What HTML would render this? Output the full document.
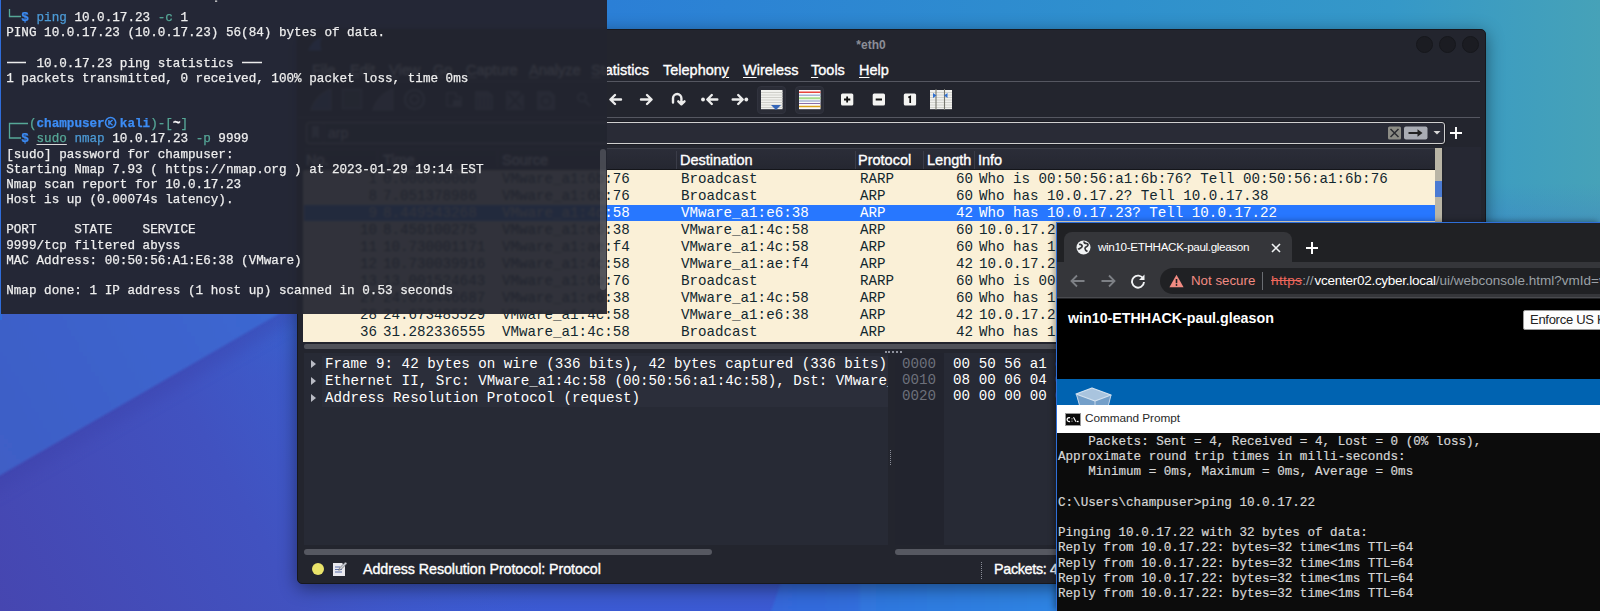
<!DOCTYPE html>
<html>
<head>
<meta charset="utf-8">
<title>desktop</title>
<style>
*{box-sizing:border-box;margin:0;padding:0}
html,body{width:1600px;height:611px;overflow:hidden}
body{position:relative;font-family:"Liberation Sans",sans-serif;background:#3d56c4;}
.abs{position:absolute}
.mono{font-family:"Liberation Mono",monospace}
/* wallpaper */
#wall{position:absolute;left:0;top:0;width:1600px;height:611px;
 background:linear-gradient(100deg,#2b74d8 0%,#2d86d2 45%,#3596c6 75%,#47a2b4 100%);}
#wall2{position:absolute;left:0;top:0;width:1600px;height:611px;
 background:linear-gradient(180deg,rgba(60,80,200,0) 0%,rgba(60,80,200,0) 35%,rgba(62,84,200,.85) 60%,rgba(62,80,196,1) 100%);}
/* ---------- Wireshark ---------- */
#ws{position:absolute;left:297px;top:29px;width:1189px;height:555px;background:#23252e;border-radius:5px 5px 5px 5px;border:1px solid #17181d;
 box-shadow:0 4px 18px rgba(0,0,0,.45);color:#fff;overflow:hidden}
#ws .title{position:absolute;left:0;width:1146px;top:8px;text-align:center;font-size:12px;color:#8b8e97;font-weight:bold}
#ws .wb{position:absolute;top:6px;width:17px;height:17px;border-radius:50%;background:#1b1c22;border:1px solid #16171c}
#ws .menu{position:absolute;top:32px;font-size:14.5px;color:#fff;white-space:nowrap;-webkit-text-stroke:.35px #fff}
#ws .menu u{text-decoration-thickness:1px;text-underline-offset:2px}
#ws .hl{position:absolute;left:0;height:1.500px;background:#555761}

#ws .ico{position:absolute;top:58px;width:24px;height:24px}
#ws .tbtn{position:absolute;top:55px;width:29px;height:29px;border-radius:4px;background:#2c2e38;border:1px solid #30323c}
#filter{position:absolute;left:8px;top:92px;width:1139px;height:22px;border:1px solid #cfcfcf;border-radius:3px;background:#292b36;box-shadow:0 0 0 1px #1b1c23}
#filter .txt{position:absolute;left:21px;top:2px;font-size:14px;color:#fff}
#plist{position:absolute;left:6px;top:118px;width:1131px;height:194px;background:#faf0d7;overflow:hidden}
#phead{position:absolute;left:0;top:0;width:1131px;height:22px;background:linear-gradient(#2b2d38,#252731);border-top:1px solid #3a3c47;border-bottom:1px solid #14151a}
#phead span{position:absolute;top:3px;font-size:14.5px;color:#fff;-webkit-text-stroke:.35px #fff;white-space:nowrap}
#phead i{position:absolute;top:2px;width:1px;height:18px;background:#3a3c48}
.prow{position:absolute;left:0;width:1131px;height:17px;font-family:"Liberation Mono",monospace;font-size:14.200px;line-height:17px;color:#12272e;white-space:pre}
.prow span{position:absolute;top:1px}
.prow.sel{background:linear-gradient(#faf0d7 1px,#2777ff 1px);color:#fff}
#pscroll{position:absolute;left:1137px;top:118px;width:7px;height:194px;background:#b9b5a6}
#pscroll b{position:absolute;left:0;top:33px;width:7px;height:16px;background:#4b7bd3}
#dpane{position:absolute;left:6px;top:323px;width:584px;height:192px;background:#272a35;overflow:hidden}
#dpane .r{position:absolute;left:0;width:584px;height:17px;margin-top:1px;background:linear-gradient(to right,transparent 18px,#2b2e3a 18px);font-family:"Liberation Mono",monospace;font-size:14.200px;line-height:17px;color:#fff;white-space:pre;padding-left:21px}
#dpane .r:before{content:"";position:absolute;left:6.500px;top:4px;border-left:5px solid #b9bbc4;border-top:4px solid transparent;border-bottom:4px solid transparent}
#bpane{position:absolute;left:597px;top:323px;width:590px;height:192px;background:#272a35;overflow:hidden}
#bpane .off{position:absolute;left:0;top:0;width:49px;height:192px;background:#22242e}
#bpane .r{position:absolute;left:7px;margin-top:1px;height:17px;font-family:"Liberation Mono",monospace;font-size:14.200px;line-height:17px;color:#fff;white-space:pre}
#bpane .r em{font-style:normal;color:#6d707b}
.hsb{position:absolute;height:6px;border-radius:3px;background:#565861}
#status{position:absolute;left:0;top:526px;width:1187px;height:27px;}
#status .t{position:absolute;top:5px;font-size:14.300px;letter-spacing:-.08px;color:#fff;-webkit-text-stroke:.35px #fff;white-space:nowrap}

/* ---------- Terminal ---------- */
#term{position:absolute;left:1px;top:-6px;width:605.5px;height:319.500px;background:rgba(34,36,47,.935);
 -webkit-backdrop-filter:blur(1.200px);backdrop-filter:blur(1.200px);overflow:hidden}
#term pre{position:absolute;left:5.200px;top:16px;font-family:"Liberation Mono",monospace;font-size:12.640px;line-height:15.170px;color:#eeeeee;white-space:pre;-webkit-text-stroke:.25px}
#term .g{color:#56a897}
#term .b{color:#3c8cf4;font-weight:bold}
#term .c{color:#4c9bd6}
#term .w{color:#fff;font-weight:bold}
#term .u{text-decoration:underline;text-decoration-color:#d8d8d8;text-underline-offset:1.500px}
#term .sb{position:absolute;left:598.700px;top:155px;width:6px;height:141px;border-radius:3px;background:rgba(255,255,255,.17)}

/* ---------- Browser ---------- */
#br{position:absolute;left:1056px;top:222px;width:544px;height:389px;background:#202124;border-left:1px solid #2f6fd8;border-top:1px solid #2f6fd8;overflow:hidden;
 box-shadow:-2px -1px 6px rgba(0,0,0,.35)}
#br .tab{position:absolute;left:7px;top:9px;width:228px;height:31px;background:#35363a;border-radius:8px 8px 0 0}
#br .tabt{position:absolute;left:41px;top:17px;font-size:11.700px;color:#fff;white-space:nowrap;letter-spacing:-.36px}
#br .bar{position:absolute;left:0;top:39px;width:544px;height:36px;background:#35363a;border-bottom:1px solid #4a4b4f}
#br .omni{position:absolute;left:103px;top:45px;width:460px;height:26px;border-radius:13px;background:#202124}
#br .ns{position:absolute;left:134px;top:50px;font-size:13.300px;color:#f28b82;white-space:nowrap}
#br .url{position:absolute;left:214px;top:50px;font-size:13.500px;color:#9aa0a6;white-space:nowrap}
#br .url s{color:#ee675c;letter-spacing:.4px}
#br .url b{font-weight:normal;color:#fff;letter-spacing:-.27px;margin-left:1px}
#page{position:absolute;left:0;top:76px;width:544px;height:313px;background:#000}
#page .h{position:absolute;left:11px;top:11px;font-size:14.250px;font-weight:bold;color:#fff;white-space:nowrap}
#page .btn{position:absolute;left:466px;top:11px;width:120px;height:20px;background:#fdfdfd;border:1px solid #9a9a9a;border-radius:2px;font-size:13px;letter-spacing:-.28px;line-height:18px;color:#222;padding-left:6px;white-space:nowrap}
#desk{position:absolute;left:0;top:80px;width:544px;height:26px;background:#0063b1}
#cmdt{position:absolute;left:0;top:106px;width:544px;height:28px;background:#fff}
#cmdt span{position:absolute;left:28px;top:6px;font-size:11.800px;letter-spacing:-.05px;color:#2a2a2a;white-space:nowrap}
#cmd{position:absolute;left:0;top:134px;width:544px;height:180px;background:#0c0c0c}
#cmd pre{position:absolute;left:1px;top:2px;font-family:"Liberation Mono",monospace;font-size:12.600px;line-height:15.200px;color:#d6d6d6;white-space:pre;-webkit-text-stroke:.2px}
</style>
</head>
<body>
<svg class="abs" style="left:0;top:0" width="1600" height="611" viewBox="0 0 1600 611">
  <defs>
    <linearGradient id="gx" x1="0" y1="0" x2="1" y2="0">
      <stop offset="0" stop-color="#2c6fda"/><stop offset=".38" stop-color="#2b7fd6"/><stop offset=".7" stop-color="#2f90cd"/><stop offset=".87" stop-color="#3598c8"/><stop offset="1" stop-color="#46a2b8"/>
    </linearGradient>
    <linearGradient id="gy" x1="0" y1="0" x2="0" y2="1">
      <stop offset="0" stop-color="#3d5bcb" stop-opacity="0"/><stop offset=".3" stop-color="#3d5bcb" stop-opacity="0"/><stop offset=".62" stop-color="#3d5bcb" stop-opacity=".9"/><stop offset=".93" stop-color="#3d5acb" stop-opacity="1"/><stop offset="1" stop-color="#3b5ad3" stop-opacity="1"/>
    </linearGradient>
    <linearGradient id="gbl" x1="0" y1="1" x2="1" y2="0" gradientUnits="userSpaceOnUse" >
      <stop offset="0" stop-color="#4546b0"/><stop offset="1" stop-color="#3d5bcb"/>
    </linearGradient>
    <linearGradient id="gbl2" gradientUnits="userSpaceOnUse" x1="0" y1="611" x2="420" y2="380">
      <stop offset="0" stop-color="#4646b0"/><stop offset=".55" stop-color="#4152c0"/><stop offset="1" stop-color="#3d5bcb" stop-opacity="0"/>
    </linearGradient>
    <linearGradient id="gtri" gradientUnits="userSpaceOnUse" x1="0" y1="470" x2="300" y2="300">
      <stop offset="0" stop-color="#3f5ec6"/><stop offset="1" stop-color="#3b68d2"/>
    </linearGradient>
    <linearGradient id="gr1" gradientUnits="userSpaceOnUse" x1="772" y1="0" x2="1060" y2="0"><stop offset="0" stop-color="#3468da"/><stop offset=".3" stop-color="#336edc"/><stop offset=".31" stop-color="#3076de"/><stop offset="1" stop-color="#2d84e2"/></linearGradient>
    <filter id="bl"><feGaussianBlur stdDeviation="1.200"/></filter>
    <filter id="bl2"><feGaussianBlur stdDeviation="7"/></filter>
  </defs>
  <rect width="1600" height="611" fill="url(#gx)"/>
  <rect width="1600" height="611" fill="url(#gy)"/>
  <rect width="700" height="611" fill="url(#gbl2)"/>
  <path d="M-20 489L320 292L-20 292z" fill="#3a3fa8" opacity=".35" filter="url(#bl2)" transform="translate(6,10)"/>
  <path d="M-20 487L320 290L-20 290z" fill="url(#gtri)" filter="url(#bl)"/>
  <rect x="0" y="0" width="2" height="320" fill="#2f6cd9"/>
  <path d="M768 620L782 580L1060 580L1060 620z" fill="url(#gr1)" filter="url(#bl)"/>
</svg>
<div class="abs" style="left:1px;top:0;width:605.500px;height:313.500px;background:#41529a"></div>
<!-- ================= WIRESHARK ================= -->
<div id="ws">
  <div class="title">*eth0</div>
  <svg class="abs" style="left:10px;top:7px" width="15" height="14" viewBox="0 0 15 14"><path d="M0 13.500C3 7 7 2 14 0c-2 4-2 9-.5 13.500z" fill="#3f6fe0"/></svg>
  <div class="wb" style="left:1118px"></div>
  <div class="wb" style="left:1141px"></div>
  <div class="wb" style="left:1164px"></div>
  <div class="menu" style="left:14px"><u>F</u>ile</div>
  <div class="menu" style="left:52px"><u>E</u>dit</div>
  <div class="menu" style="left:91px"><u>V</u>iew</div>
  <div class="menu" style="left:135px"><u>G</u>o</div>
  <div class="menu" style="left:168px"><u>C</u>apture</div>
  <div class="menu" style="left:231px"><u>A</u>nalyze</div>
  <div class="menu" style="left:293px"><u>S</u>tatistics</div>
  <div class="menu" style="left:365px">Telephon<u>y</u></div>
  <div class="menu" style="left:445px"><u>W</u>ireless</div>
  <div class="menu" style="left:513px"><u>T</u>ools</div>
  <div class="menu" style="left:561px"><u>H</u>elp</div>
  <div class="hl" style="top:50.500px;width:1182px"></div>
  <div class="hl" style="top:87px;width:1182px;height:1px"></div>

  <!-- toolbar -->
<svg class="abs" style="left:0;top:52px" width="1187" height="36" viewBox="298 82 1187 36">
  <!-- left group (dim, under terminal) -->
  <g opacity=".9">
   <path d="M311 110 L331 110 L331 89 C322 92 314 100 311 110Z" fill="#4a5f9e" stroke="#8d93a8" stroke-width="1.2"/>
   <rect x="342.5" y="89.500" width="19" height="19" fill="#4a4d59" stroke="#8d93a8" stroke-width="1.2"/>
   <path d="M373 110 L393 110 L393 89 C384 92 376 100 373 110Z" fill="#6f748a" stroke="#8d93a8" stroke-width="1.2"/>
   <circle cx="414.500" cy="99.500" r="9.500" fill="none" stroke="#8d93a8" stroke-width="2.200"/>
   <circle cx="414.500" cy="99.500" r="4.200" fill="none" stroke="#8d93a8" stroke-width="2"/>
   <path d="M447 93h9v4h5v9h-14z" fill="none" stroke="#8d93a8" stroke-width="1.600"/><rect x="453" y="100" width="8" height="6" fill="#8d93a8"/>
   <path d="M475 91h13l5 4v15h-18z" fill="#7c8196"/><path d="M478 97v11M482 97v11M486 97v11M490 97v11" stroke="#3a3d4a" stroke-width="1.200"/>
   <path d="M506 91h13l5 4v15h-18z" fill="#7c8196"/><path d="M508 93l14 15M522 93l-14 15" stroke="#2b2d38" stroke-width="2"/>
   <path d="M537 91h13l5 4v15h-18z" fill="#7c8196"/><circle cx="546" cy="101" r="4.500" fill="none" stroke="#2b2d38" stroke-width="2"/>
   <circle cx="582" cy="97.500" r="4" fill="none" stroke="#8d93a8" stroke-width="1.800"/><path d="M585 101l5 5" stroke="#8d93a8" stroke-width="2"/>
  </g>
  <!-- navigation arrows -->
  <g fill="none" stroke="#ececec" stroke-width="2.400" stroke-linecap="round" stroke-linejoin="round">
   <path d="M621 99.500H610.800M615 95l-4.600 4.500 4.600 4.500"/>
   <path d="M641 99.500H651.200M647 95l4.600 4.500-4.600 4.500"/>
   <path d="M673 102.500V98.200a4.200 4.200 0 0 1 8.400 0v5M678.300 101.300l3.100 3 3.100-3"/>
   <path d="M717.300 99.500H707.800M711.800 95l-4.500 4.500 4.500 4.500"/>
   <path d="M732.700 99.500H742.200M738.200 95l4.500 4.500-4.500 4.500"/>
  </g>
  <circle cx="703" cy="99.500" r="1.900" fill="#ececec"/>
  <circle cx="746.300" cy="99.500" r="1.900" fill="#ececec"/>
  <!-- autoscroll -->
  <rect x="757.500" y="86.500" width="28" height="27" rx="3.500" fill="#2b2d37" stroke="#31333e"/>
  <rect x="761" y="90" width="21.500" height="19.200" fill="#f1f1ee"/>
  <path d="M761 92.500h21.500M761 95h21.500M761 97.500h21.500M761 100h21.500M761 102.500h21.500M761 105h21.500M761 107.500h21.500" stroke="#cfcfca" stroke-width="1"/>
  <path d="M771 105h10l-5 5z" fill="#3465b8"/>
  <!-- colorize -->
  <rect x="795.500" y="86.500" width="28" height="27" rx="3.500" fill="#2b2d37" stroke="#31333e"/>
  <rect x="799" y="90" width="21.500" height="19.200" fill="#fbfbfb"/>
  <path d="M799 92.300h21.500" stroke="#e8453c" stroke-width="1.500"/>
  <path d="M799 95.200h21.500" stroke="#a9b7d6" stroke-width="1.500"/>
  <path d="M799 98.200h21.500" stroke="#a8dc8c" stroke-width="2"/>
  <path d="M799 101h21.500" stroke="#a9b7d6" stroke-width="1.500"/>
  <path d="M799 103.500h21.500" stroke="#8a6fa8" stroke-width="1.200"/>
  <path d="M799 106.500h21.500" stroke="#d9a21b" stroke-width="1.500"/>
  <!-- zoom buttons -->
  <rect x="841" y="93.500" width="12.300" height="12" rx="1.500" fill="#f4f4f2"/>
  <path d="M844 99.500h6.300M847.150 96.400v6.200" stroke="#111" stroke-width="1.800"/>
  <rect x="872.700" y="93.500" width="12.300" height="12" rx="1.500" fill="#f4f4f2"/>
  <path d="M875.700 99.500h6.300" stroke="#111" stroke-width="1.800"/>
  <rect x="903.800" y="93.500" width="12.300" height="12" rx="1.500" fill="#f4f4f2"/>
  <path d="M908.300 97.600l1.900-1v6.400" stroke="#111" stroke-width="1.700" fill="none"/>
  <!-- resize columns -->
  <rect x="930" y="90" width="22" height="19.200" fill="#f1f1ee"/>
  <path d="M930 92.500h22M930 95h22M930 97.500h22M930 100h22M930 102.500h22M930 105h22M930 107.500h22" stroke="#d2d2cd" stroke-width="1"/>
  <path d="M936 89v21M944.500 89v21" stroke="#77776f" stroke-width="1.100"/>
  <path d="M933 93l3.500 2.500-3.500 2.500zM947.500 93l-3.500 2.500 3.500 2.500z" fill="#2f6fd0"/>
</svg>
  <div id="filter">
    <svg class="abs" style="left:4px;top:3px" width="9" height="14" viewBox="0 0 9 14"><path d="M1 0h7v13l-3.500-3L1 13z" fill="#8b90a4"/></svg>
    <div class="abs" style="left:16px;top:0;width:1px;height:20px;background:#4a4d58"></div>
    <div class="txt">arp</div>
    <svg class="abs" style="left:1081px;top:3px" width="64" height="14" viewBox="1388 126 64 14">
      <rect x="1388" y="126.500" width="13" height="13" rx="1.500" fill="#8c8c85"/>
      <path d="M1390.500 129l8 8M1398.500 129l-8 8" stroke="#2a2b30" stroke-width="1.500"/>
      <rect x="1404" y="126.500" width="23.500" height="13" rx="2" fill="#a9acb4"/>
      <path d="M1408.500 133h10" stroke="#222" stroke-width="2"/><path d="M1417.500 129.300l5 3.700-5 3.700z" fill="#222"/>
      <path d="M1433.500 131h7l-3.500 3.500z" fill="#d8d8d8"/>
    </svg>
  </div>
  <svg class="abs" style="left:1151px;top:96px" width="14" height="14" viewBox="0 0 14 14"><path d="M7 1v12M1 7h12" stroke="#fff" stroke-width="1.900"/></svg>
<div id="plist">
<div id="phead">
<span style="left:2px">No.</span>
<span style="left:79px">Time</span>
<span style="left:198px">Source</span>
<span style="left:376px">Destination</span>
<span style="left:554px">Protocol</span>
<span style="left:623px">Length</span>
<span style="left:674px">Info</span>
<i style="left:73px"></i>
<i style="left:193px"></i>
<i style="left:372px"></i>
<i style="left:551px"></i>
<i style="left:619px"></i>
<i style="left:670px"></i>
</div>
<div class="prow" style="top:22px"><span style="right:1058px">1</span><span style="left:79px">0.000000000</span><span style="left:198px">VMware_a1:6b:76</span><span style="left:377px">Broadcast</span><span style="left:556px">RARP</span><span style="right:462px">60</span><span style="left:675px">Who is 00:50:56:a1:6b:76? Tell 00:50:56:a1:6b:76</span></div>
<div class="prow" style="top:39px"><span style="right:1058px">8</span><span style="left:79px">7.051378986</span><span style="left:198px">VMware_a1:6b:76</span><span style="left:377px">Broadcast</span><span style="left:556px">ARP</span><span style="right:462px">60</span><span style="left:675px">Who has 10.0.17.2? Tell 10.0.17.38</span></div>
<div class="prow sel" style="top:56px"><span style="right:1058px">9</span><span style="left:79px">8.449543268</span><span style="left:198px">VMware_a1:4c:58</span><span style="left:377px">VMware_a1:e6:38</span><span style="left:556px">ARP</span><span style="right:462px">42</span><span style="left:675px">Who has 10.0.17.23? Tell 10.0.17.22</span></div>
<div class="prow" style="top:73px"><span style="right:1058px">10</span><span style="left:79px">8.450100275</span><span style="left:198px">VMware_a1:e6:38</span><span style="left:377px">VMware_a1:4c:58</span><span style="left:556px">ARP</span><span style="right:462px">60</span><span style="left:675px">10.0.17.23 is at 00:50:56:a1:e6:38</span></div>
<div class="prow" style="top:90px"><span style="right:1058px">11</span><span style="left:79px">10.730001171</span><span style="left:198px">VMware_a1:ae:f4</span><span style="left:377px">VMware_a1:4c:58</span><span style="left:556px">ARP</span><span style="right:462px">60</span><span style="left:675px">Who has 10.0.17.22? Tell 10.0.17.2</span></div>
<div class="prow" style="top:107px"><span style="right:1058px">12</span><span style="left:79px">10.730039916</span><span style="left:198px">VMware_a1:4c:58</span><span style="left:377px">VMware_a1:ae:f4</span><span style="left:556px">ARP</span><span style="right:462px">42</span><span style="left:675px">10.0.17.22 is at 00:50:56:a1:4c:58</span></div>
<div class="prow" style="top:124px"><span style="right:1058px">13</span><span style="left:79px">13.001524643</span><span style="left:198px">VMware_a1:6b:76</span><span style="left:377px">Broadcast</span><span style="left:556px">RARP</span><span style="right:462px">60</span><span style="left:675px">Who is 00:50:56:a1:6b:76? Tell 00:50:56:a1:6b:76</span></div>
<div class="prow" style="top:141px"><span style="right:1058px">27</span><span style="left:79px">24.673446687</span><span style="left:198px">VMware_a1:e6:38</span><span style="left:377px">VMware_a1:4c:58</span><span style="left:556px">ARP</span><span style="right:462px">60</span><span style="left:675px">Who has 10.0.17.22? Tell 10.0.17.23</span></div>
<div class="prow" style="top:158px"><span style="right:1058px">28</span><span style="left:79px">24.673485529</span><span style="left:198px">VMware_a1:4c:58</span><span style="left:377px">VMware_a1:e6:38</span><span style="left:556px">ARP</span><span style="right:462px">42</span><span style="left:675px">10.0.17.22 is at 00:50:56:a1:4c:58</span></div>
<div class="prow" style="top:175px"><span style="right:1058px">36</span><span style="left:79px">31.282336555</span><span style="left:198px">VMware_a1:4c:58</span><span style="left:377px">Broadcast</span><span style="left:556px">ARP</span><span style="right:462px">42</span><span style="left:675px">Who has 10.0.17.23? Tell 10.0.17.22</span></div>
</div>
<div id="pscroll"><b></b></div>
<div class="abs" style="left:5px;top:141px;width:1px;height:171px;background:#faf0d7"></div>
<div class="abs" style="left:1146px;top:117px;width:37px;height:200px;background:#262833"></div>
  <div class="hsb" style="left:6px;top:313.500px;width:1131px;height:5.500px;border-radius:2px;background:#505259"></div>
  <div id="dpane">
    <div class="r" style="top:2px">Frame 9: 42 bytes on wire (336 bits), 42 bytes captured (336 bits) on interface eth0, id 0</div>
    <div class="r" style="top:19px">Ethernet II, Src: VMware_a1:4c:58 (00:50:56:a1:4c:58), Dst: VMware_a1:e6:38 (00:50:56:a1:e6:38)</div>
    <div class="r" style="top:36px">Address Resolution Protocol (request)</div>
  </div>
  <div id="bpane">
    <div class="off"></div>
    <div class="r" style="top:2px"><em>0000</em>  00 50 56 a1 e6 38 00 50  56 a1 4c 58 08 06 00 01</div>
    <div class="r" style="top:18px"><em>0010</em>  08 00 06 04 00 01 00 50  56 a1 4c 58 0a 00 11 16</div>
    <div class="r" style="top:34px"><em>0020</em>  00 00 00 00 00 00 0a 00  11 17</div>
  </div>
  <div class="hsb" style="left:6px;top:519px;width:408px"></div>
  <div class="hsb" style="left:597px;top:519px;width:560px"></div>
  <div class="abs" style="left:592px;top:420px;width:0;height:15px;border-left:1.500px dotted #8a8d98"></div>
  <div class="abs" style="left:587px;top:321px;width:17px;height:0;border-top:2px dotted #8e919c"></div>
  <div id="status">
    <div class="abs" style="left:14px;top:7px;width:12px;height:12px;border-radius:50%;background:#e9e36a"></div>
    
    <svg class="abs" style="left:34px;top:5px" width="15" height="16" viewBox="0 0 15 16"><path d="M1 2h9l3 3v10H1z" fill="#e9e9ee"/><path d="M3 6h5M3 8.500h7M3 11h7" stroke="#5a6fa8" stroke-width="1"/><path d="M13.500 1l-6 6-.8 2.300 2.300-.8 6-6z" fill="#c9ccd6" stroke="#555" stroke-width=".6"/></svg>
    <div class="abs" style="left:682.500px;top:6px;width:0;height:17px;border-left:1.500px dotted #8a8d98"></div>
    <div class="t" style="left:65px">Address Resolution Protocol: Protocol</div>
    <div class="t" style="left:696px;letter-spacing:-.3px">Packets: 43 · Displayed: 10 (23.3%)</div>
  </div>
</div>



<!-- ================= BROWSER ================= -->
<div id="br">
  <div class="tab"></div>
  <svg class="abs" style="left:19px;top:17px" width="15" height="15" viewBox="0 0 15 15"><circle cx="7.500" cy="7.500" r="7" fill="#f1f3f4"/><path d="M3 4.500c1.500-.5 2.500 0 3 1s-.5 2-1.500 2.500S3 9.500 2 8.500M8 1.500c0 1.500 1 2 2.500 2s2 1.500 1 2.500-2.500 1-2.500 2.500 1.500 2.500 2.500 3" fill="none" stroke="#35363a" stroke-width="1.700"/></svg>
  <div class="tabt">win10-ETHHACK-paul.gleason</div>
  <svg class="abs" style="left:214px;top:20px" width="10" height="10" viewBox="0 0 10 10"><path d="M1 1l8 8M9 1l-8 8" stroke="#f1f3f4" stroke-width="1.600"/></svg>
  <svg class="abs" style="left:249px;top:19px" width="12" height="12" viewBox="0 0 12 12"><path d="M6 0v12M0 6h12" stroke="#fff" stroke-width="2"/></svg>
  <div class="bar"></div>
  <svg class="abs" style="left:13px;top:51px" width="16" height="14" viewBox="0 0 16 14"><path d="M14.500 7H2M7 1.500L1.500 7 7 12.500" fill="none" stroke="#7d8085" stroke-width="1.800"/></svg>
  <svg class="abs" style="left:43px;top:51px" width="16" height="14" viewBox="0 0 16 14"><path d="M1.500 7H14M9 1.500L14.500 7 9 12.500" fill="none" stroke="#7d8085" stroke-width="1.800"/></svg>
  <svg class="abs" style="left:73px;top:50px" width="16" height="16" viewBox="0 0 16 16"><path d="M13.300 5.800A6 6 0 1 0 14 9" fill="none" stroke="#f1f3f4" stroke-width="1.900"/><path d="M14.500 1.500v5.500H9z" fill="#f1f3f4"/></svg>
  <div class="omni"></div>
  <svg class="abs" style="left:112px;top:51px" width="15" height="14" viewBox="0 0 15 14"><path d="M7.500 .8L14.600 13.200H.4z" fill="#f28b82"/><path d="M7.500 5v4.200" stroke="#202124" stroke-width="1.600"/><circle cx="7.500" cy="11" r=".9" fill="#202124"/></svg>
  <div class="ns">Not secure</div>
  <div class="abs" style="left:205px;top:49px;width:1px;height:18px;background:#6a6d72"></div>
  <div class="url"><s>https</s>://<b>vcenter02.cyber.local</b>/ui/webconsole.html?vmId=vm-1234&amp;vmName</div>
  <div id="page">
    <div class="h">win10-ETHHACK-paul.gleason</div>
    <div class="btn">Enforce US Keyboard Layout</div>
    <div id="desk">
      <svg class="abs" style="left:18px;top:8px" width="38" height="20" viewBox="0 0 38 20"><path d="M1 7L17 1l19 7-3 12H5z" fill="#7fa5cc" opacity=".9"/><path d="M1 7L17 1l19 7-16 6z" fill="#a9c4de" stroke="#d3e2f0" stroke-width="1.300" stroke-linejoin="round"/><path d="M1.500 7.500l3.500 12.500M20 14v6M36 8l-3 12" stroke="#c5d7ea" stroke-width="1" fill="none"/></svg>
    </div>
    <div id="cmdt">
      <svg class="abs" style="left:8px;top:8px" width="16" height="13" viewBox="0 0 16 13"><rect x=".5" y=".5" width="15" height="12" fill="#0a0a0a" stroke="#9a9a9a"/><path d="M0 0h16v2.500H0z" fill="#d0d0d0" opacity=".0"/><path d="M5 4.800a2 2 0 1 0 0 3.600" stroke="#fff" stroke-width="1.300" fill="none"/><path d="M7 5.500v.8M7 7.700v.8" stroke="#fff" stroke-width="1.200"/><path d="M8.500 4.300l2.500 4.500" stroke="#fff" stroke-width="1.100"/><path d="M11.800 8.500h1.800" stroke="#fff" stroke-width="1.300"/></svg>
      <span>Command Prompt</span>
    </div>
    <div id="cmd"><pre>    Packets: Sent = 4, Received = 4, Lost = 0 (0% loss),
Approximate round trip times in milli-seconds:
    Minimum = 0ms, Maximum = 0ms, Average = 0ms

C:\Users\champuser&gt;ping 10.0.17.22

Pinging 10.0.17.22 with 32 bytes of data:
Reply from 10.0.17.22: bytes=32 time&lt;1ms TTL=64
Reply from 10.0.17.22: bytes=32 time&lt;1ms TTL=64
Reply from 10.0.17.22: bytes=32 time&lt;1ms TTL=64
Reply from 10.0.17.22: bytes=32 time&lt;1ms TTL=64</pre></div>
  </div>
</div>

<!-- ================= TERMINAL ================= -->
<div id="term">
<pre>  <span class="b">$</span> <span class="c">ping</span> 10.0.17.23 <span class="g">-c</span> 1
PING 10.0.17.23 (10.0.17.23) 56(84) bytes of data.

    10.0.17.23 ping statistics
1 packets transmitted, 0 received, 100% packet loss, time 0ms


   <span class="g">(</span><span class="b">champuser  kali</span><span class="g">)-[</span><span class="w">~</span><span class="g">]</span>
  <span class="b">$</span> <span class="g u">sudo</span> <span class="c">nmap</span> 10.0.17.23 <span class="g">-p</span> 9999
[sudo] password for champuser:
Starting Nmap 7.93 ( https://nmap.org ) at 2023-01-29 19:14 EST
Nmap scan report for 10.0.17.23
Host is up (0.00074s latency).

PORT     STATE    SERVICE
9999/tcp filtered abyss
MAC Address: 00:50:56:A1:E6:38 (VMware)

Nmap done: 1 IP address (1 host up) scanned in 0.53 seconds</pre>
<svg class="abs" style="left:0;top:5.500px" width="300" height="160" viewBox="1 0 300 160">
  <g fill="none" stroke="#56a897" stroke-width="1.300">
    <path d="M9.500 9v7.500H21"/>
    <path d="M28 123.500H9.500V138H21"/>
  </g>
  <rect x="215" y=".5" width="2.200" height="1.300" fill="#d8d8d8"/>
  <g fill="none" stroke="#ececec" stroke-width="1.300">
    <path d="M7 62.500H26M242 62.500H262"/>
  </g>
  <circle cx="110.600" cy="122.600" r="5.100" fill="none" stroke="#3c8cf4" stroke-width="1.600"/>
  <path d="M108.900 120v5.200M112.600 120l-3.200 2.600 3.200 2.600" fill="none" stroke="#3c8cf4" stroke-width="1.400"/>
</svg>
<div class="sb"></div>
</div>

</body>
</html>
